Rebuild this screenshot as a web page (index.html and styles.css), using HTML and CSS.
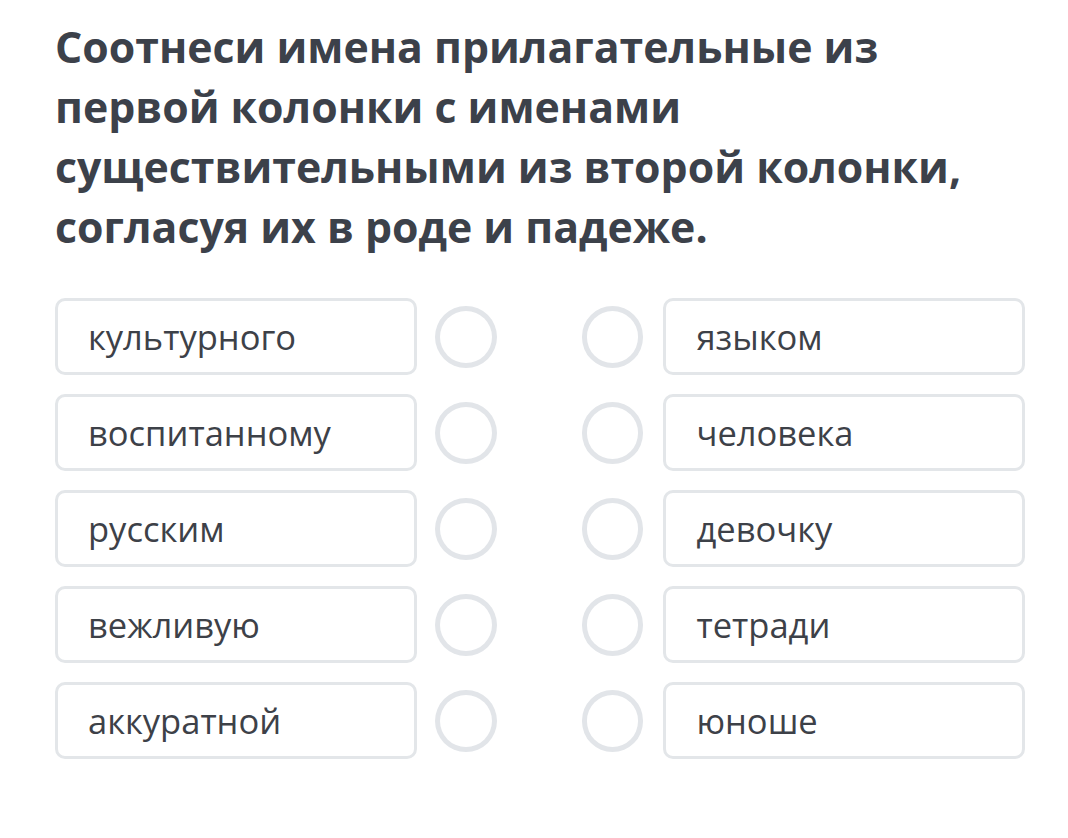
FILE: index.html
```html
<!DOCTYPE html>
<html lang="ru">
<head>
<meta charset="utf-8">
<link rel="stylesheet" href="styles.css">
</head>
<body>
<div class="page">
  <h1 class="title">Соотнеси имена прилагательные из первой колонки с именами существительными из второй колонки, согласуя их в роде и падеже.</h1>
  <div class="rows">
    <div class="row"><div class="box">культурного</div><span class="dot"></span><span class="dot dot-r"></span><div class="box">языком</div></div>
    <div class="row"><div class="box">воспитанному</div><span class="dot"></span><span class="dot dot-r"></span><div class="box">человека</div></div>
    <div class="row"><div class="box">русским</div><span class="dot"></span><span class="dot dot-r"></span><div class="box">девочку</div></div>
    <div class="row"><div class="box">вежливую</div><span class="dot"></span><span class="dot dot-r"></span><div class="box">тетради</div></div>
    <div class="row"><div class="box">аккуратной</div><span class="dot"></span><span class="dot dot-r"></span><div class="box">юноше</div></div>
  </div>
</div>
</body>
</html>
```
FILE: styles.css
```css
html, body {
  margin: 0;
  padding: 0;
  background: #ffffff;
}
.page {
  padding: 17px 0 0 55px;
  width: 970px;
  font-family: "Open Sans", "Noto Sans", sans-serif;
}
.title {
  margin: 0;
  font-size: 42.8px;
  line-height: 60px;
  font-weight: 700;
  color: #3c414a;
}
.rows {
  margin-top: 41px;
  display: flex;
  flex-direction: column;
  gap: 19px;
}
.row {
  display: flex;
  align-items: center;
  height: 77px;
}
.box {
  box-sizing: border-box;
  width: 362px;
  height: 77px;
  border: 3px solid #e3e6e9;
  border-radius: 10px;
  padding-left: 30px;
  display: flex;
  align-items: center;
  font-size: 34.5px;
  color: #3d4148;
}
.dot {
  box-sizing: border-box;
  width: 62px;
  height: 62px;
  border: 5px solid #e2e5e9;
  border-radius: 50%;
  margin-left: 18px;
}
.dot-r {
  margin-left: 85px;
  margin-right: 20px;
}
```
